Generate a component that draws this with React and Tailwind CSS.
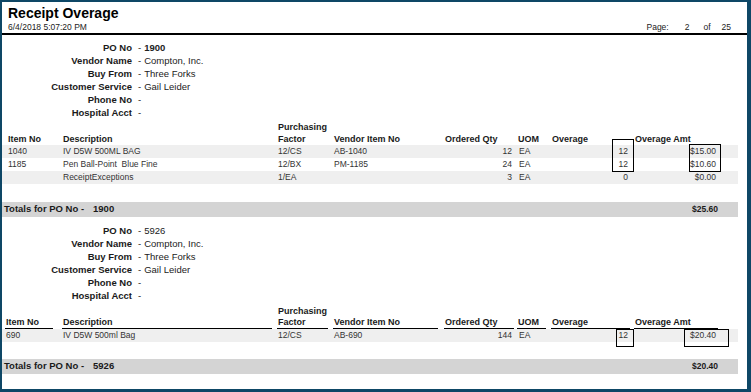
import React from "react";

const COLS = "grid grid-cols-[57px_215px_56px_111px_73px_34px_83px_86px]";

const headers = [
  { top: "", label: "Item No", ul: "w-[48px]" },
  { top: "", label: "Description", ul: "w-[210px]" },
  { top: "Purchasing", label: "Factor", ul: "w-[51px]" },
  { top: "", label: "Vendor Item No", ul: "w-[105px]" },
  { top: "", label: "Ordered Qty", ul: "w-[70px]" },
  { top: "", label: "UOM", ul: "w-[29px]" },
  { top: "", label: "Overage", ul: "w-[79px]" },
  { top: "", label: "Overage Amt", ul: "w-[84px]" },
];

function InfoBlock({ po, bold }) {
  const rows = [
    ["PO No", po],
    ["Vendor Name", "Compton, Inc."],
    ["Buy From", "Three Forks"],
    ["Customer Service", "Gail Leider"],
    ["Phone No", ""],
    ["Hospital Acct", ""],
  ];
  return (
    <div className="flex flex-col">
      {rows.map(([l, v], i) => (
        <div key={l} className="flex h-[13px] items-center text-[9.5px] leading-[13px]">
          <span className="w-[130px] text-right font-bold text-[#1a1a1a]">{l}</span>
          <span className="ml-[6px] text-[#222]">-</span>
          <span className={"ml-[3px] text-[#222] " + (i === 0 && bold ? "font-bold" : "")}>{v}</span>
        </div>
      ))}
    </div>
  );
}

function HeaderRow({ underline, lh, first }) {
  return (
    <div className={COLS + " pl-[3px]"}>
      {headers.map((h, i) => (
        <div key={h.label} className="flex flex-col justify-end">
          {h.top ? (
            <div className={"pl-[1px] text-[9px] font-bold text-[#1a1a1a] " + lh}>{h.top}</div>
          ) : null}
          <div
            className={
              (i === 0 ? first : "pl-[1px]") +
              " text-[9px] font-bold text-[#1a1a1a] " +
              lh +
              " " +
              h.ul +
              (underline ? " border-b border-black" : "")
            }
          >
            {h.label}
          </div>
        </div>
      ))}
    </div>
  );
}

function DataRow({ r, shaded, first }) {
  return (
    <div
      className={
        COLS +
        " h-[13px] w-[736px] items-center pl-[3px] text-[8.5px] leading-[13px] text-[#333]" +
        (shaded ? " bg-[#efefef]" : " bg-white")
      }
    >
      <div className={first}>{r[0]}</div>
      <div className="pl-[1px] whitespace-pre">{r[1]}</div>
      <div className="pl-[1px]">{r[2]}</div>
      <div className="pl-[1px]">{r[3]}</div>
      <div className="pr-[5px] text-right">{r[4]}</div>
      <div className="pl-[2px]">{r[5]}</div>
      <div className="pr-[6px] text-right">{r[6]}</div>
      <div className="pr-[4px] text-right">{r[7]}</div>
    </div>
  );
}

function TotalsBar({ po, amt }) {
  return (
    <div className="flex h-[15px] w-[736px] items-center justify-between bg-[#d4d4d4] pl-[2px] pr-[20px] text-[9.5px] font-bold text-[#1a1a1a]">
      <div>
        Totals for PO No -<span className="ml-[9px]">{po}</span>
      </div>
      <div className="text-[8.5px]">{amt}</div>
    </div>
  );
}

export default function App() {
  return (
    <div className="h-[392px] w-[751px] bg-[#0e4766] pb-[3px] pl-[2px] pr-[4px] pt-[2px]">
      <div className="flex h-full w-full flex-col bg-white font-['Liberation_Sans',Arial,sans-serif]">
        {/* Report header */}
        <div className="mt-[3px] pl-[6px] text-[14px] font-bold leading-[16px] text-black">
          Receipt Overage
        </div>
        <div className="mt-[1px] flex items-center justify-between pl-[6px] pr-[16px] text-[8.5px] leading-[10px] text-[#222]">
          <span>6/4/2018 5:07:20 PM</span>
          <span className="flex">
            <span>Page:</span>
            <span className="ml-[16px]">2</span>
            <span className="ml-[14px]">of</span>
            <span className="ml-[11px]">25</span>
          </span>
        </div>
        <div className="mt-[1px] h-[2px] w-full bg-black" />

        {/* Section 1 */}
        <div className="mt-[5.5px]">
          <InfoBlock po="1900" bold />
        </div>
        <div className="relative mt-[2.5px]">
          <HeaderRow underline={false} lh="leading-[12px]" first="pl-[3px]" />
          <DataRow shaded first="pl-[3px]" r={["1040", "IV D5W 500ML BAG", "12/CS", "AB-1040", "12", "EA", "12", "$15.00"]} />
          <DataRow first="pl-[3px]" r={["1185", "Pen Ball-Point  Blue Fine", "12/BX", "PM-1185", "24", "EA", "12", "$10.60"]} />
          <DataRow shaded first="pl-[3px]" r={["", "ReceiptExceptions", "1/EA", "", "3", "EA", "0", "$0.00"]} />
          <div className="absolute left-[610px] top-[18px] h-[33px] w-[22px] border border-black" />
          <div className="absolute left-[687px] top-[23px] h-[28px] w-[32px] border border-black" />
        </div>
        <div className="mt-[18px]">
          <TotalsBar po="1900" amt="$25.60" />
        </div>

        {/* Section 2 */}
        <div className="mt-[6.5px]">
          <InfoBlock po="5926" />
        </div>
        <div className="relative mt-[4.5px]">
          <HeaderRow underline lh="leading-[11px]" first="pl-[1px]" />
          <DataRow shaded first="pl-[1px]" r={["690", "IV D5W 500ml Bag", "12/CS", "AB-690", "144", "EA", "12", "$20.40"]} />
          <div className="absolute left-[614px] top-[23px] h-[18px] w-[18px] border border-black" />
          <div className="absolute left-[682px] top-[23px] h-[18px] w-[45px] border border-black" />
        </div>
        <div className="mt-[17px]">
          <TotalsBar po="5926" amt="$20.40" />
        </div>
      </div>
    </div>
  );
}
